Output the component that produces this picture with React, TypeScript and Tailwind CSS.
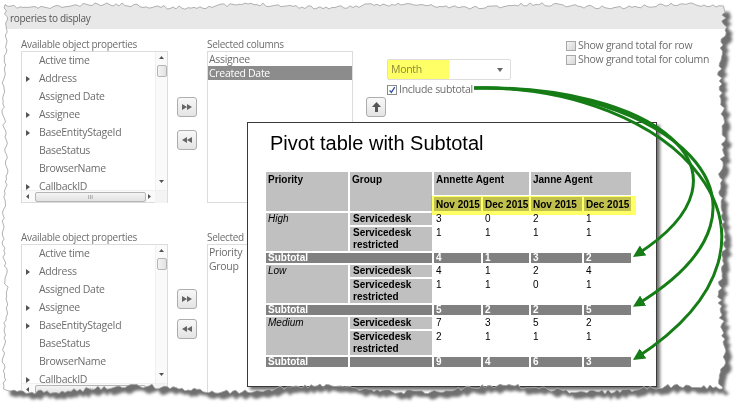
import React from "react";

type Prop = { label: string; arrow: boolean };

const PROPS: Prop[] = [
  { label: "Active time", arrow: false },
  { label: "Address", arrow: true },
  { label: "Assigned Date", arrow: false },
  { label: "Assignee", arrow: true },
  { label: "BaseEntityStageId", arrow: true },
  { label: "BaseStatus", arrow: false },
  { label: "BrowserName", arrow: false },
  { label: "CallbackID", arrow: true },
];

// torn paper outline, drawn once
function tornPath() {
  let s = 11;
  const r = () => {
    s = (s * 16807) % 2147483647;
    return s / 2147483647;
  };
  const pts: [number, number][] = [];
  const L = 5, T = 6, R = 722, B = 389;
  for (let x = L; x < R; x += 3) pts.push([x, T + (r() - 0.5) * 3.5 + Math.sin(x / 23) * 1.6]);
  for (let y = T; y < B; y += 3) pts.push([R + (r() - 0.5) * 5 + Math.sin(y / 17) * 2.2, y]);
  for (let x = R; x > L; x -= 3) pts.push([x, B + (r() - 0.5) * 4.5 + Math.sin(x / 29) * 3]);
  for (let y = B; y > T; y -= 3) pts.push([L + (r() - 0.5) * 3.5 + Math.sin(y / 21) * 1.6, y]);
  return "M" + pts.map((p) => p[0].toFixed(1) + "," + p[1].toFixed(1)).join("L") + "Z";
}

const TORN = tornPath();

function VScroll() {
  return (
    <div className="flex w-[12px] flex-col items-center border-l border-[#f0f0f0] bg-[#fafafa]">
      <svg className="mt-[4px]" width="5" height="3">
        <path d="M0 3L2.5 0L5 3Z" fill="#555" />
      </svg>
      <div className="mt-[6px] h-[12px] w-[10px] rounded-[2px] border border-[#b5b5b5] bg-gradient-to-r from-[#f4f4f4] to-[#e2e2e2]" />
      <div className="flex-1" />
      <svg className="mb-[7px]" width="5" height="3">
        <path d="M0 0L2.5 3L5 0Z" fill="#555" />
      </svg>
    </div>
  );
}

function HScroll() {
  return (
    <div className="flex h-[12px] items-center border-t border-[#f0f0f0] bg-[#fafafa]">
      <svg className="ml-[4px]" width="3" height="5">
        <path d="M3 0L0 2.5L3 5Z" fill="#555" />
      </svg>
      <div className="ml-[6px] flex h-[10px] w-[111px] items-center justify-center rounded-[2px] border border-[#b5b5b5] bg-gradient-to-b from-[#f4f4f4] to-[#e2e2e2] text-[6px] leading-none text-[#777]">
        III
      </div>
      <svg className="ml-[2px]" width="3" height="5">
        <path d="M0 0L3 2.5L0 5Z" fill="#555" />
      </svg>
      <div className="flex-1" />
      <div className="h-[12px] w-[12px] bg-[#f4f4f4]" />
    </div>
  );
}

function PropList() {
  return (
    <div className="flex h-[152px] w-[147px] flex-col border border-[#dcdcdc] bg-white">
      <div className="flex min-h-0 flex-1">
        <div className="flex-1 overflow-hidden text-[10.5px] tracking-[-0.3px] text-[#6d6d6d]">
          {PROPS.map((p) => (
            <div key={p.label} className="flex h-[18px] items-center whitespace-nowrap">
              <span className="flex w-[17px] pl-[4px]">
                {p.arrow && (
                  <svg width="4" height="6">
                    <path d="M0 0L4 3L0 6Z" fill="#555" />
                  </svg>
                )}
              </span>
              <span>{p.label}</span>
            </div>
          ))}
        </div>
        <VScroll />
      </div>
      <HScroll />
    </div>
  );
}

function MoveButton({ dir }: { dir: "right" | "left" | "up" }) {
  return (
    <div className="flex h-[20px] w-[20px] items-center justify-center rounded-[3px] border border-[#adadad] bg-gradient-to-b from-[#f8f8f8] to-[#e4e4e4]">
      {dir === "right" && (
        <svg width="10" height="6">
          <path d="M0 0L5 3L0 6ZM5 0L10 3L5 6Z" fill="#666" />
        </svg>
      )}
      {dir === "left" && (
        <svg width="10" height="6">
          <path d="M5 0L0 3L5 6ZM10 0L5 3L10 6Z" fill="#666" />
        </svg>
      )}
      {dir === "up" && (
        <svg width="9" height="10">
          <path d="M4.5 0L9 5H6V10H3V5H0Z" fill="#555" />
        </svg>
      )}
    </div>
  );
}

function Check({ checked }: { checked?: boolean }) {
  return (
    <span
      className={
        checked
          ? "flex h-[10px] w-[10px] items-center justify-center border border-[#8a8a8a] bg-white"
          : "h-[10px] w-[10px] border border-[#a8a8a8] bg-gradient-to-br from-[#f4f4f4] to-[#d8d8d8]"
      }
    >
      {checked && (
        <svg width="8" height="8" viewBox="0 0 10 10">
          <path d="M2 5.5L4.2 8L8.5 1.5" stroke="#2a4fa0" strokeWidth="1.6" fill="none" />
        </svg>
      )}
    </span>
  );
}

function Label({ children }: { children: React.ReactNode }) {
  return <div className="h-[14px] whitespace-nowrap text-[10px] leading-[14px] tracking-[-0.3px] text-[#6d6d6d]">{children}</div>;
}

function SelectedBox({ items, active }: { items: string[]; active?: string }) {
  return (
    <div className="h-[152px] w-[146px] border border-[#dcdcdc] bg-white text-[10.5px] tracking-[-0.3px] text-[#6d6d6d]">
      {items.map((it) => (
        <div
          key={it}
          className={it === active ? "h-[14px] bg-[#8c8c8c] pl-[1px] leading-[14px] text-white" : "h-[14px] pl-[1px] leading-[14px]"}
        >
          {it}
        </div>
      ))}
    </div>
  );
}

const LG = "bg-[#c0c0c0] pl-[2px]";
const SUB = "bg-[#808080] pl-[2px] text-white font-bold leading-[10.5px]";
const VAL = "pl-[2px]";

function PivotPanel() {
  const body = [
    { prio: "High", a: ["3", "0", "2", "1"], b: ["1", "1", "1", "1"], s: ["4", "1", "3", "2"] },
    { prio: "Low", a: ["4", "1", "2", "4"], b: ["1", "1", "0", "1"], s: ["5", "2", "2", "5"] },
    { prio: "Medium", a: ["7", "3", "5", "2"], b: ["2", "1", "1", "1"], s: ["9", "4", "6", "3"] },
  ];
  return (
    <div className="absolute left-[247px] top-[122px] h-[265px] w-[410px] border border-[#3a3a3a] bg-white font-['Liberation_Sans',Arial,sans-serif] text-black shadow-[3px_3px_3px_rgba(0,0,0,0.55)]">
      <div className="pl-[22px] pt-[9px] text-[20px] leading-[23px]">Pivot table with Subtotal</div>
      <div className="relative ml-[18px] mt-[17px] grid w-max grid-cols-[82px_82px_47px_46px_51px_47px] grid-rows-[23px_14px_11.5px_24px_10.5px_11.5px_24px_10.5px_11.5px_24px_10.5px] gap-[2px] text-[10px] leading-[11.5px]">
        <div className={`${LG} row-span-2 pt-[2px] font-bold`}>Priority</div>
        <div className={`${LG} row-span-2 pt-[2px] font-bold`}>Group</div>
        <div className={`${LG} col-span-2 pt-[2px] font-bold`}>Annette Agent</div>
        <div className={`${LG} col-span-2 pt-[2px] font-bold`}>Janne Agent</div>
        {["Nov 2015", "Dec 2015", "Nov 2015", "Dec 2015"].map((m, i) => (
          <div key={i} className={`${LG} whitespace-nowrap pt-[2px] font-bold leading-[12px]`}>
            {m}
          </div>
        ))}
        {body.map((g, gi) => (
          <React.Fragment key={g.prio}>
            <div className={`${LG} row-span-2 italic`}>{g.prio}</div>
            <div className={`${LG} pl-[3px] font-bold`}>Servicedesk</div>
            {g.a.map((v, i) => (
              <div key={"a" + i} className={VAL}>
                {v}
              </div>
            ))}
            <div className={`${LG} pl-[3px] font-bold leading-[12px]`}>Servicedesk restricted</div>
            {g.b.map((v, i) => (
              <div key={"b" + i} className={VAL}>
                {v}
              </div>
            ))}
            {gi < 2 ? (
              <div className={`${SUB} col-span-2`}>Subtotal</div>
            ) : (
              <>
                <div className={SUB}>Subtotal</div>
                <div className={SUB} />
              </>
            )}
            {g.s.map((v, i) => (
              <div key={"s" + i} className={SUB}>
                {v}
              </div>
            ))}
          </React.Fragment>
        ))}
        <div className="pointer-events-none absolute left-[165px] top-[24px] h-[19px] w-[205px] bg-[#ffff00]/60 mix-blend-multiply" />
      </div>
    </div>
  );
}

function Arrows() {
  return (
    <svg className="pointer-events-none absolute inset-0" width="744" height="408">
      <defs>
        <marker id="ah" viewBox="0 0 10 10" refX="7" refY="5" markerWidth="4" markerHeight="4" orient="auto">
          <path d="M0,0 L10,5 L0,10 z" fill="#167d16" />
        </marker>
      </defs>
      <g stroke="#167d16" strokeWidth="3" fill="none" markerEnd="url(#ah)">
        <path d="M474 88 C650 84, 770 170, 636 255" />
        <path d="M474 88 C660 84, 810 200, 636 305" />
        <path d="M474 88 C670 84, 825 235, 636 358" />
      </g>
    </svg>
  );
}

function TornEdges() {
  const outside = `M0,0H744V408H0Z ${TORN}`;
  return (
    <svg className="pointer-events-none absolute inset-0" width="744" height="408">
      <defs>
        <clipPath id="outside">
          <path d={outside} clipRule="evenodd" />
        </clipPath>
        <filter id="soft" x="-5%" y="-5%" width="110%" height="110%">
          <feGaussianBlur stdDeviation="1.5" />
        </filter>
      </defs>
      <path d={outside} fill="#fff" fillRule="evenodd" />
      <g clipPath="url(#outside)">
        <path d={TORN} transform="translate(6,6)" fill="#707070" filter="url(#soft)" />
      </g>
      <path d={TORN} fill="none" stroke="#a0a0a0" strokeWidth="0.8" />
    </svg>
  );
}

export default function App() {
  return (
    <div className="relative h-[408px] w-[744px] overflow-hidden bg-white pl-[3px] pt-[3px] font-['Segoe_UI','Open_Sans',sans-serif]">
      <div className="flex h-[26px] w-[724px] items-center bg-[#e8e8e8] pl-[7px] pt-[4px] text-[10px] tracking-[-0.3px] text-[#555]">
        roperies to display
      </div>

      {/* upper block: columns */}
      <div className="mt-[8px] flex pl-[18px]">
        <div className="w-[147px]">
          <Label>Available object properties</Label>
          <PropList />
        </div>
        <div className="ml-[9px] flex flex-col gap-[13px] pt-[60px]">
          <MoveButton dir="right" />
          <MoveButton dir="left" />
        </div>
        <div className="ml-[10px]">
          <Label>Selected columns</Label>
          <SelectedBox items={["Assignee", "Created Date"]} active="Created Date" />
        </div>
        <div className="ml-[13px] pt-[60px]">
          <MoveButton dir="up" />
        </div>
        <div className="ml-[1px] pt-[22px]">
          <div className="relative flex h-[21px] w-[124px] items-center justify-between rounded-[2px] border border-[#dddddd] bg-white pl-[3px] pr-[7px] text-[10.5px] tracking-[-0.3px] text-[#8a8a8a]">
            <span>Month</span>
            <svg width="6" height="4">
              <path d="M0 0H6L3 4Z" fill="#666" />
            </svg>
            <div className="absolute left-0 top-0 h-full w-[61px] bg-[#ffff00]/60 mix-blend-multiply" />
          </div>
          <div className="mt-[2px] flex items-center gap-[2px] text-[10.5px] tracking-[-0.3px] text-[#6d6d6d]">
            <Check checked />
            <span>Include subtotal</span>
          </div>
        </div>
        <div className="ml-[55px] flex flex-col pt-[2px] text-[10.5px] tracking-[-0.3px] text-[#6d6d6d]">
          <div className="flex h-[14px] items-center gap-[2px] whitespace-nowrap">
            <Check />
            <span>Show grand total for row</span>
          </div>
          <div className="flex h-[14px] items-center gap-[2px] whitespace-nowrap">
            <Check />
            <span>Show grand total for column</span>
          </div>
        </div>
      </div>

      {/* lower block: rows */}
      <div className="mt-[27px] flex pl-[18px]">
        <div className="w-[147px]">
          <Label>Available object properties</Label>
          <PropList />
        </div>
        <div className="ml-[9px] flex flex-col gap-[10px] pt-[59px]">
          <MoveButton dir="right" />
          <MoveButton dir="left" />
        </div>
        <div className="ml-[10px]">
          <Label>Selected rows</Label>
          <SelectedBox items={["Priority", "Group"]} />
        </div>
      </div>

      <PivotPanel />
      <Arrows />
      <TornEdges />
    </div>
  );
}
